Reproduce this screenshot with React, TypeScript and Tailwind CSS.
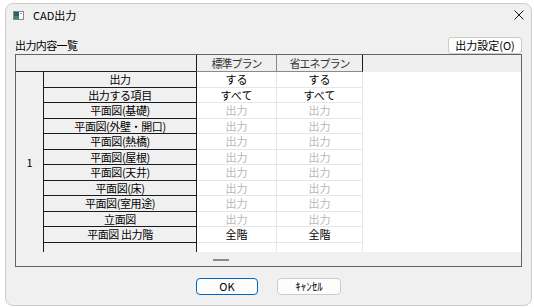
import React from 'react';

type Row = { label: string; a: string; b: string; dim?: boolean };

const rows: Row[] = [
    { label: '出力', a: 'する', b: 'する' },
    { label: '出力する項目', a: 'すべて', b: 'すべて' },
    { label: '平面図(基礎)', a: '出力', b: '出力', dim: true },
    { label: '平面図(外壁・開口)', a: '出力', b: '出力', dim: true },
    { label: '平面図(熱橋)', a: '出力', b: '出力', dim: true },
    { label: '平面図(屋根)', a: '出力', b: '出力', dim: true },
    { label: '平面図(天井)', a: '出力', b: '出力', dim: true },
    { label: '平面図(床)', a: '出力', b: '出力', dim: true },
    { label: '平面図(室用途)', a: '出力', b: '出力', dim: true },
    { label: '立面図', a: '出力', b: '出力', dim: true },
    { label: '平面図 出力階', a: '全階', b: '全階' },
];

function TitleIcon() {
    return (
        <svg width="11" height="9" viewBox="0 0 11 9">
            <rect x="0.5" y="0.5" width="10" height="8" fill="#ffffff" stroke="#8a8a8a" />
            <rect x="1" y="1" width="5" height="7" fill="#2f5d6e" />
            <rect x="1" y="5" width="5" height="3" fill="#3f8a5a" />
            <rect x="7" y="2" width="2" height="1" fill="#9a9a9a" />
        </svg>
    );
}

export default function App() {
    return (
        <div className="w-[534px] h-[307px] bg-white pt-[3px] pl-[5px] font-['Noto_Sans_CJK_JP',sans-serif] text-black">
            <div className="w-[527px] h-[303px] rounded-[8px] border border-[#cdcdcd] bg-[#f0f0f0] flex flex-col">
                {/* title bar */}
                <div className="h-[22px] flex items-center pl-[7px] pr-[7px]">
                    <TitleIcon />
                    <span className="ml-[9px] text-[11px] leading-none">CAD出力</span>
                    <svg className="ml-auto" width="10" height="10" viewBox="0 0 10 10">
                        <path d="M0.5 0.5 L9.5 9.5 M9.5 0.5 L0.5 9.5" stroke="#1a1a1a" strokeWidth="1" />
                    </svg>
                </div>

                <div className="mt-[11px] h-[17px] px-[9px] flex items-center justify-between">
                    <span className="text-[11px] leading-none tracking-[-0.6px]">出力内容一覧</span>
                    <button className="h-[17px] w-[74px] rounded-[3px] border border-[#cccccc] bg-[#fdfdfd] text-[11px] leading-none flex items-center justify-center">
                        出力設定(O)
                    </button>
                </div>

                {/* grid */}
                <div className="mx-[9px] h-[213px] border border-[#646464] flex flex-col text-[11px] leading-none">
                    <div className="h-[17px] flex bg-[#efefef]">
                        <div className="w-[180px] border-b border-[#222222]" />
                        <div className="w-[81px] border-l border-r border-b border-l-[#1a1a1a] border-r-[#8a8a8a] border-b-[#8a8a8a] flex items-center justify-center text-[#333333] tracking-[-1px]">
                            標準プラン
                        </div>
                        <div className="w-[86px] border-r border-b border-r-[#1a1a1a] border-b-[#8a8a8a] flex items-center justify-center text-[#333333] tracking-[-1px]">
                            省エネプラン
                        </div>
                        <div className="flex-1" />
                    </div>

                    <div className="h-[180px] flex bg-white">
                        <div className="w-[28px] border-r border-[#1a1a1a] bg-[#f0f0f0] flex items-center justify-center">
                            1
                        </div>
                        <div className="flex-1 flex flex-col">
                            {rows.map((r, i) => (
                                <div key={r.label} className={`flex ${i % 2 === 0 ? 'h-[16px]' : 'h-[15px]'}`}>
                                    <div className="w-[153px] bg-[#f0f0f0] border-r border-b border-[#1a1a1a] flex items-center justify-center tracking-[-0.4px]">
                                        {r.label}
                                    </div>
                                    <div
                                        className={`w-[80px] border-r border-b border-[#e6e6e6] flex items-center justify-center ${r.dim ? 'text-[#b9b9b9]' : 'text-black'}`}
                                    >
                                        {r.a}
                                    </div>
                                    <div
                                        className={`w-[86px] border-r border-b border-[#e6e6e6] flex items-center justify-center ${r.dim ? 'text-[#b9b9b9]' : 'text-black'}`}
                                    >
                                        {r.b}
                                    </div>
                                </div>
                            ))}
                            <div className="flex-1 flex">
                                <div className="w-[153px] bg-[#f0f0f0] border-r border-[#1a1a1a]" />
                                <div className="w-[80px] border-r border-[#e6e6e6]" />
                                <div className="w-[86px] border-r border-[#e6e6e6]" />
                            </div>
                        </div>
                    </div>

                    <div className="flex-1 bg-[#f0f0f0] pt-[7px] pl-[197px]">
                        <div className="w-[16px] h-[2px] bg-[#8a8a8a]" />
                    </div>
                </div>

                <div className="mt-[11px] flex justify-center gap-[19px] text-[11px] leading-none">
                    <button className="h-[17px] w-[62px] rounded-[4px] border border-[#0067c0] bg-[#fdfdfd] flex items-center justify-center">
                        OK
                    </button>
                    <button className="h-[17px] w-[64px] rounded-[4px] border border-[#cccccc] bg-[#fdfdfd] flex items-center justify-center">
                        ｷｬﾝｾﾙ
                    </button>
                </div>
            </div>
        </div>
    );
}
